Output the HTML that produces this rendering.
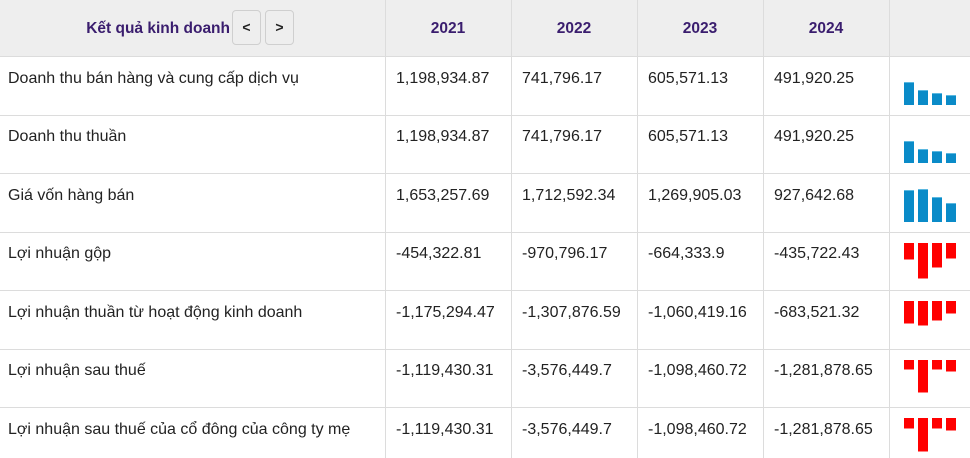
<!DOCTYPE html>
<html><head><meta charset="utf-8"><style>
*{margin:0;padding:0;box-sizing:border-box}
body{width:970px;height:458px;overflow:hidden;background:#fff;font-family:"Liberation Sans",Arial,sans-serif;color:#222;position:relative}
.hd{position:absolute;left:0;top:0;width:970px;height:56px;background:#eeeeee}
.h{position:absolute;top:1px;height:56px;line-height:56px;text-align:center;font-weight:bold;font-size:15.5px;color:#3a1d6e}
.vl{position:absolute;top:0;width:1px;height:458px;background:#dcdcdc}
.hl{position:absolute;left:0;width:970px;height:1px;background:#dcdcdc}
.t{position:absolute;font-size:16px;line-height:18px;white-space:nowrap;color:#222}
.btn{position:absolute;top:10px;width:29px;height:35px;border:1px solid #cfcfcf;border-radius:4px;background:#eee;font-size:14px;line-height:33px;text-align:center;color:#222;font-weight:bold}
.b{position:absolute;width:10px}
.bl{background:#0a8bc8;border-top:1px solid #5bb8e0}
.rd{background:#ff0000;border-bottom:1px solid #ff8080}
</style></head><body>
<div class="hd"></div>
<div class="h" style="left:60px;width:170px;text-align:right">Kết quả kinh doanh</div>
<div class="btn" style="left:232px">&lt;</div>
<div class="btn" style="left:265px">&gt;</div>
<div class="h" style="left:385px;width:126px">2021</div>
<div class="h" style="left:511px;width:126px">2022</div>
<div class="h" style="left:637px;width:126px">2023</div>
<div class="h" style="left:763px;width:126px">2024</div>
<div class="vl" style="left:385px"></div><div class="vl" style="left:511px"></div><div class="vl" style="left:637px"></div><div class="vl" style="left:763px"></div><div class="vl" style="left:889px"></div>
<div class="hl" style="top:56px"></div><div class="hl" style="top:115px"></div><div class="hl" style="top:173px"></div><div class="hl" style="top:232px"></div><div class="hl" style="top:290px"></div><div class="hl" style="top:349px"></div><div class="hl" style="top:407px"></div>

<div class="t" style="left:8px;top:70px">Doanh thu bán hàng và cung cấp dịch vụ</div>
<div class="t" style="left:396px;top:70px">1,198,934.87</div><div class="t" style="left:522px;top:70px">741,796.17</div><div class="t" style="left:648px;top:70px">605,571.13</div><div class="t" style="left:774px;top:70px">491,920.25</div>

<div class="t" style="left:8px;top:128px">Doanh thu thuần</div>
<div class="t" style="left:396px;top:128px">1,198,934.87</div><div class="t" style="left:522px;top:128px">741,796.17</div><div class="t" style="left:648px;top:128px">605,571.13</div><div class="t" style="left:774px;top:128px">491,920.25</div>

<div class="t" style="left:8px;top:187px">Giá vốn hàng bán</div>
<div class="t" style="left:396px;top:187px">1,653,257.69</div><div class="t" style="left:522px;top:187px">1,712,592.34</div><div class="t" style="left:648px;top:187px">1,269,905.03</div><div class="t" style="left:774px;top:187px">927,642.68</div>

<div class="t" style="left:8px;top:245px">Lợi nhuận gộp</div>
<div class="t" style="left:396px;top:245px">-454,322.81</div><div class="t" style="left:522px;top:245px">-970,796.17</div><div class="t" style="left:648px;top:245px">-664,333.9</div><div class="t" style="left:774px;top:245px">-435,722.43</div>

<div class="t" style="left:8px;top:304px">Lợi nhuận thuần từ hoạt động kinh doanh</div>
<div class="t" style="left:396px;top:304px">-1,175,294.47</div><div class="t" style="left:522px;top:304px">-1,307,876.59</div><div class="t" style="left:648px;top:304px">-1,060,419.16</div><div class="t" style="left:774px;top:304px">-683,521.32</div>

<div class="t" style="left:8px;top:362px">Lợi nhuận sau thuế</div>
<div class="t" style="left:396px;top:362px">-1,119,430.31</div><div class="t" style="left:522px;top:362px">-3,576,449.7</div><div class="t" style="left:648px;top:362px">-1,098,460.72</div><div class="t" style="left:774px;top:362px">-1,281,878.65</div>

<div class="t" style="left:8px;top:421px">Lợi nhuận sau thuế của cổ đông của công ty mẹ</div>
<div class="t" style="left:396px;top:421px">-1,119,430.31</div><div class="t" style="left:522px;top:421px">-3,576,449.7</div><div class="t" style="left:648px;top:421px">-1,098,460.72</div><div class="t" style="left:774px;top:421px">-1,281,878.65</div>

<div class="b bl" style="left:904px;top:82px;height:23px"></div><div class="b bl" style="left:918px;top:90px;height:15px"></div><div class="b bl" style="left:932px;top:93px;height:12px"></div><div class="b bl" style="left:946px;top:95px;height:10px"></div>
<div class="b bl" style="left:904px;top:141px;height:22px"></div><div class="b bl" style="left:918px;top:149px;height:14px"></div><div class="b bl" style="left:932px;top:151px;height:12px"></div><div class="b bl" style="left:946px;top:153px;height:10px"></div>
<div class="b bl" style="left:904px;top:190px;height:32px"></div><div class="b bl" style="left:918px;top:189px;height:33px"></div><div class="b bl" style="left:932px;top:197px;height:25px"></div><div class="b bl" style="left:946px;top:203px;height:19px"></div>
<div class="b rd" style="left:904px;top:243px;height:17px"></div><div class="b rd" style="left:918px;top:243px;height:36px"></div><div class="b rd" style="left:932px;top:243px;height:25px"></div><div class="b rd" style="left:946px;top:243px;height:16px"></div>
<div class="b rd" style="left:904px;top:301px;height:23px"></div><div class="b rd" style="left:918px;top:301px;height:25px"></div><div class="b rd" style="left:932px;top:301px;height:20px"></div><div class="b rd" style="left:946px;top:301px;height:13px"></div>
<div class="b rd" style="left:904px;top:360px;height:10px"></div><div class="b rd" style="left:918px;top:360px;height:33px"></div><div class="b rd" style="left:932px;top:360px;height:10px"></div><div class="b rd" style="left:946px;top:360px;height:12px"></div>
<div class="b rd" style="left:904px;top:418px;height:11px"></div><div class="b rd" style="left:918px;top:418px;height:34px"></div><div class="b rd" style="left:932px;top:418px;height:11px"></div><div class="b rd" style="left:946px;top:418px;height:13px"></div>
</body></html>
